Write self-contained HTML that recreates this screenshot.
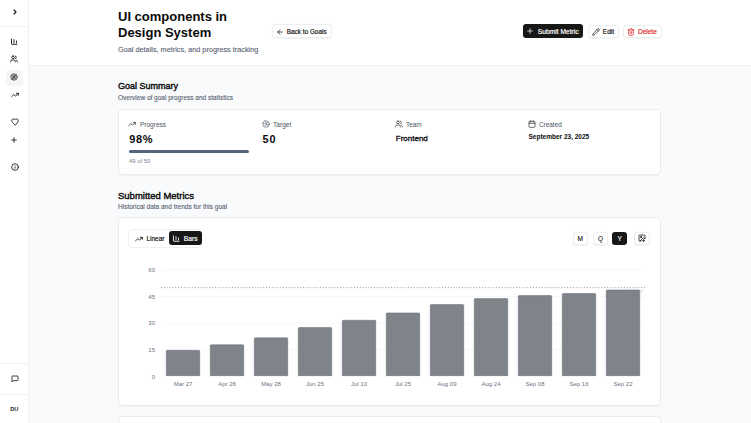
<!DOCTYPE html>
<html><head><meta charset="utf-8">
<style>
*{box-sizing:border-box;margin:0;padding:0}
html,body{width:751px;height:423px;overflow:hidden;background:#f9fafb;font-family:"Liberation Sans",sans-serif;color:#0a0a0a}
.abs{position:absolute}
.t{position:absolute;white-space:nowrap;line-height:1}
svg{position:absolute;overflow:visible}
.side{left:0;top:0;width:29px;height:423px;background:#fff;border-right:1px solid #efeff1}
.hdr{left:29px;top:0;width:722px;height:66px;background:#fff;border-bottom:1px solid #f1f2f3}
.card{position:absolute;background:#fff;border:1px solid #ebebed;border-radius:4.6px;box-shadow:0 0.5px 1px rgba(0,0,0,0.035)}
.btn{position:absolute;background:#fff;border:0.5px solid #eceef0;border-radius:3px;box-shadow:0 0.5px 1px rgba(0,0,0,0.05)}
.m{-webkit-text-stroke:0.18px currentColor}
.ic{fill:none;stroke:#141414;stroke-width:1.6;stroke-linecap:round;stroke-linejoin:round}
</style></head><body>

<!-- sidebar -->
<div class="abs side"></div>
<div class="abs" style="left:0;top:26px;width:28px;height:1px;background:#f1f1f3"></div>
<div class="abs" style="left:0;top:363px;width:28px;height:1px;background:#f1f1f3"></div>
<div class="abs" style="left:0;top:394px;width:28px;height:1px;background:#f1f1f3"></div>
<div class="abs" style="left:5.5px;top:69.5px;width:17.4px;height:16.3px;background:#f5f5f6;border-radius:3px"></div>

<!-- chevron -->
<svg style="left:10.9px;top:7.6px" width="8" height="8" viewBox="0 0 24 24"><path class="ic" d="M9 18l6-6-6-6" style="stroke-width:3.3;stroke:#111"/></svg>
<!-- bar chart -->
<svg style="left:10px;top:38px" width="8" height="8" viewBox="0 0 8 8"><g fill="none" stroke="#141414" stroke-linecap="round" stroke-linejoin="round" stroke-width="0.9"><path d="M1.5 0.9V5.9Q1.5 6.3 1.9 6.3H7"/><path d="M4 5V1.6M6.5 5V3"/></g></svg>
<!-- users -->
<svg style="left:10.25px;top:55.2px" width="8" height="8" viewBox="0 0 24 24"><path class="ic" d="M16 21v-2a4 4 0 0 0-4-4H6a4 4 0 0 0-4 4v2M9 3a4 4 0 1 0 0 8 4 4 0 0 0 0-8zM22 21v-2a4 4 0 0 0-3-3.87M16 3.13a4 4 0 0 1 0 7.75" style="stroke-width:2.5"/></svg>
<!-- target -->
<svg style="left:10.45px;top:73.45px" width="8" height="8" viewBox="0 0 24 24"><g fill="none" stroke-linecap="round"><circle cx="12" cy="12" r="10" fill="#a3a3a3" stroke="#5a5a5a" stroke-width="2"/><path d="M19 5L5 19M8 8l8 8" stroke="#333" stroke-width="2.2"/><path d="M12 2.5c3 3 3 7 0 9.5M12 21.5c-3-3-3-7 0-9.5" stroke="#555" stroke-width="1.5"/></g></svg>
<!-- trending -->
<svg style="left:10.7px;top:91.3px" width="8" height="8" viewBox="0 0 24 24"><path class="ic" d="M22 7l-8.5 8.5-5-5L2 17M16 7h6v6" style="stroke-width:2.6"/></svg>
<!-- heart -->
<svg style="left:10.65px;top:118.1px" width="8" height="8" viewBox="0 0 24 24"><path class="ic" d="M19 14c1.49-1.46 3-3.21 3-5.5A5.5 5.5 0 0 0 16.5 3c-1.76 0-3 .5-4.5 2-1.5-1.5-2.74-2-4.5-2A5.5 5.5 0 0 0 2 8.5c0 2.3 1.5 4.05 3 5.5l7 7z" style="stroke-width:2.5"/></svg>
<!-- plus -->
<svg style="left:10.4px;top:135.9px" width="8" height="8" viewBox="0 0 24 24"><path class="ic" d="M12 5v14M5 12h14" style="stroke-width:2.5"/></svg>
<!-- info -->
<svg style="left:10.5px;top:162.7px" width="8" height="8" viewBox="0 0 24 24"><g class="ic" style="stroke-width:2.5"><circle cx="12" cy="12" r="10"/><path d="M12 16v-4M12 8h.01"/></g></svg>
<!-- message -->
<svg style="left:10.6px;top:375.1px" width="8" height="8" viewBox="0 0 24 24"><path class="ic" d="M21 15a2 2 0 0 1-2 2H7l-4 4V5a2 2 0 0 1 2-2h14a2 2 0 0 1 2 2z" style="stroke-width:2.5"/></svg>
<div class="t" style="left:10.2px;top:406.8px;font-size:5.6px;font-weight:bold;color:#222">DU</div>

<!-- header -->
<div class="abs hdr"></div>
<div class="t" style="left:118px;top:8.5px;font-size:13px;font-weight:bold;line-height:16px;color:#0a0a0a">UI components in<br>Design System</div>
<div class="t" style="left:118px;top:45.5px;font-size:7.3px;color:#566070;-webkit-text-stroke:0.1px #566070">Goal details, metrics, and progress tracking</div>

<div class="btn" style="left:272px;top:24px;width:60px;height:14px"></div>
<svg style="left:275.5px;top:27.5px" width="8" height="8" viewBox="0 0 24 24"><path class="ic" d="M19 12H5M12 19l-7-7 7-7" style="stroke-width:2.2"/></svg>
<div class="t m" style="left:286.8px;top:29px;font-size:6.4px;color:#111">Back to Goals</div>

<div class="abs" style="left:522.7px;top:24.4px;width:60.5px;height:13.8px;background:#171717;border-radius:3px"></div>
<svg style="left:526.35px;top:27.45px" width="8" height="8" viewBox="0 0 24 24"><path class="ic" d="M12 5v14M5 12h14" style="stroke:#fff;stroke-width:2.2"/></svg>
<div class="t m" style="left:537.8px;top:28.8px;font-size:6.7px;color:#fff">Submit Metric</div>

<div class="btn" style="left:587.8px;top:24.5px;width:30.8px;height:13.9px"></div>
<svg style="left:591.5px;top:27.8px" width="8" height="8" viewBox="0 0 24 24"><path class="ic" d="M21.17 6.81a1 1 0 0 0-3.98-3.98L3.84 16.17a2 2 0 0 0-.5.83l-1.32 4.35a.5.5 0 0 0 .62.62l4.35-1.32a2 2 0 0 0 .83-.5zM15 5l4 4" style="stroke-width:2.2"/></svg>
<div class="t m" style="left:602.8px;top:28.9px;font-size:6.6px;color:#111">Edit</div>

<div class="btn" style="left:623px;top:24.5px;width:38.5px;height:13.9px"></div>
<svg style="left:626.7px;top:27.6px" width="8" height="8" viewBox="0 0 24 24"><path class="ic" d="M3 6h18M19 6v14c0 1-1 2-2 2H7c-1 0-2-1-2-2V6M8 6V4c0-1 1-2 2-2h4c1 0 2 1 2 2v2M10 11v6M14 11v6" style="stroke:#dc2626;stroke-width:2.2"/></svg>
<div class="t m" style="left:638px;top:28.9px;font-size:6.5px;color:#dc2626">Delete</div>

<!-- Goal summary -->
<div class="t" style="left:118px;top:81.8px;font-size:9px;color:#0a0a0a;-webkit-text-stroke:0.4px #0a0a0a">Goal Summary</div>
<div class="t" style="left:118px;top:95px;font-size:6.5px;color:#566070;-webkit-text-stroke:0.1px #566070">Overview of goal progress and statistics</div>

<div class="card" style="left:117.6px;top:108.5px;width:543.8px;height:66.9px"></div>

<svg style="left:128.3px;top:120.3px" width="8" height="8" viewBox="0 0 24 24"><path class="ic" d="M22 7l-8.5 8.5-5-5L2 17M16 7h6v6" style="stroke:#444;stroke-width:2.6"/></svg>
<div class="t" style="left:140px;top:121.7px;font-size:6.5px;color:#4b5563">Progress</div>
<div class="t" style="left:129.3px;top:133.9px;font-size:11px;font-weight:bold;color:#0a0a0a;letter-spacing:0.55px">98%</div>
<div class="abs" style="left:129px;top:149.8px;width:119.8px;height:3.5px;background:#56657f;border-radius:2px"></div>
<div class="t" style="left:129px;top:158.5px;font-size:5.9px;color:#7b8290">49 of 50</div>

<svg style="left:261.5px;top:120px" width="8" height="8" viewBox="0 0 24 24"><g fill="none" stroke="#6b7280" stroke-width="2" stroke-linecap="round"><circle cx="12" cy="12" r="10"/><path d="M19.13 5.09C15.22 9.14 10 10.44 2.25 10.94M21.75 12.84c-6.62-1.41-12.14 1-16.38 6.32M8.56 2.75c4.37 6 6 9.42 8 17.72"/></g></svg>
<div class="t" style="left:273px;top:121.7px;font-size:6.6px;color:#4b5563">Target</div>
<div class="t" style="left:262.6px;top:133.9px;font-size:10.8px;font-weight:bold;color:#0a0a0a;letter-spacing:0.9px">50</div>

<svg style="left:394.5px;top:120.1px" width="8" height="8" viewBox="0 0 24 24"><path class="ic" d="M16 21v-2a4 4 0 0 0-4-4H6a4 4 0 0 0-4 4v2M9 3a4 4 0 1 0 0 8 4 4 0 0 0 0-8zM22 21v-2a4 4 0 0 0-3-3.87M16 3.13a4 4 0 0 1 0 7.75" style="stroke:#555;stroke-width:2.6"/></svg>
<div class="t" style="left:406px;top:121.7px;font-size:6.4px;color:#4b5563">Team</div>
<div class="t m" style="left:395.8px;top:135.3px;font-size:8px;color:#0a0a0a;-webkit-text-stroke:0.3px #0a0a0a">Frontend</div>

<svg style="left:527.8px;top:120.2px" width="8" height="8" viewBox="0 0 24 24"><g class="ic" style="stroke:#555;stroke-width:2.6"><rect x="3" y="4" width="18" height="18" rx="2"/><path d="M16 2v4M8 2v4M3 10h18"/></g></svg>
<div class="t" style="left:539px;top:121.7px;font-size:6.4px;color:#4b5563">Created</div>
<div class="t" style="left:528.5px;top:134.1px;font-size:6.5px;font-weight:bold;color:#0a0a0a">September 23, 2025</div>

<!-- Submitted metrics -->
<div class="t" style="left:118px;top:191px;font-size:9.5px;color:#0a0a0a;-webkit-text-stroke:0.4px #0a0a0a">Submitted Metrics</div>
<div class="t" style="left:118px;top:204px;font-size:6.5px;color:#566070;-webkit-text-stroke:0.1px #566070">Historical data and trends for this goal</div>

<div class="card" style="left:117.6px;top:217px;width:543.8px;height:189.4px"></div>

<div class="abs" style="left:128.3px;top:229px;width:74.2px;height:18.5px;border:0.8px solid #eff0f2;border-radius:4px;background:#fff"></div>
<svg style="left:135.35px;top:234.5px" width="8" height="8" viewBox="0 0 24 24"><path class="ic" d="M22 7l-8.5 8.5-5-5L2 17M16 7h6v6" style="stroke-width:2.6"/></svg>
<div class="t m" style="left:146.4px;top:236.2px;font-size:6.5px;color:#111">Linear</div>
<div class="abs" style="left:169px;top:231.3px;width:33px;height:13.7px;background:#171717;border-radius:3px"></div>
<svg style="left:172px;top:234.5px" width="8" height="8" viewBox="0 0 8 8"><g fill="none" stroke="#fff" stroke-linecap="round" stroke-linejoin="round" stroke-width="0.85"><path d="M1.5 0.9V5.9Q1.5 6.3 1.9 6.3H7"/><path d="M4 5V1.6M6.5 5V3"/></g></svg>
<div class="t m" style="left:183.8px;top:236.2px;font-size:6.7px;color:#fff">Bars</div>

<div class="btn" style="left:572.6px;top:231.6px;width:15.5px;height:13.3px"></div>
<div class="t" style="left:577.6px;top:236.1px;font-size:6.6px;color:#111;-webkit-text-stroke:0.1px #111">M</div>
<div class="btn" style="left:592.8px;top:231.6px;width:15px;height:13.3px"></div>
<div class="t" style="left:597.9px;top:236.1px;font-size:6.3px;color:#111;-webkit-text-stroke:0.1px #111">Q</div>
<div class="abs" style="left:612px;top:231.6px;width:14.7px;height:13.3px;background:#171717;border-radius:3px"></div>
<div class="t" style="left:617.5px;top:236.1px;font-size:6.6px;color:#fff;-webkit-text-stroke:0.1px #fff">Y</div>
<div class="btn" style="left:634.3px;top:231.6px;width:15.5px;height:13.3px"></div>
<svg style="left:638.4px;top:234.15px" width="8" height="8" viewBox="0 0 24 24"><g class="ic" style="stroke-width:2.4"><path d="M10.3 21H5a2 2 0 0 1-2-2V5a2 2 0 0 1 2-2h14a2 2 0 0 1 2 2v10l-3.1-3.1a2 2 0 0 0-2.814.014L6 21M14 19l3 3v-5.5M17 22l3-3"/><circle cx="9" cy="9" r="2"/></g></svg>

<!-- chart -->
<svg style="left:0;top:0" width="751" height="423">
  <g stroke="#f2f3f5" stroke-width="0.7">
    <line x1="161" y1="269.90" x2="645" y2="269.90"/>
    <line x1="161" y1="296.52" x2="645" y2="296.52"/>
    <line x1="161" y1="323.15" x2="645" y2="323.15"/>
    <line x1="161" y1="349.77" x2="645" y2="349.77"/>
  </g>
  <g fill="#7f848b" stroke="#646a72" stroke-width="0.5">
    <path d="M166.25 375.65V351.35Q166.25 350.35 167.25 350.35H198.75Q199.75 350.35 199.75 351.35V375.65Z"/>
    <path d="M210.25 375.65V345.75Q210.25 344.75 211.25 344.75H242.75Q243.75 344.75 243.75 345.75V375.65Z"/>
    <path d="M254.25 375.65V338.85Q254.25 337.85 255.25 337.85H286.75Q287.75 337.85 287.75 338.85V375.65Z"/>
    <path d="M298.25 375.65V328.45Q298.25 327.45 299.25 327.45H330.75Q331.75 327.45 331.75 328.45V375.65Z"/>
    <path d="M342.25 375.65V321.25Q342.25 320.25 343.25 320.25H374.75Q375.75 320.25 375.75 321.25V375.65Z"/>
    <path d="M386.25 375.65V313.90Q386.25 312.90 387.25 312.90H418.75Q419.75 312.90 419.75 313.90V375.65Z"/>
    <path d="M430.25 375.65V305.55Q430.25 304.55 431.25 304.55H462.75Q463.75 304.55 463.75 305.55V375.65Z"/>
    <path d="M474.25 375.65V299.55Q474.25 298.55 475.25 298.55H506.75Q507.75 298.55 507.75 299.55V375.65Z"/>
    <path d="M518.25 375.65V296.55Q518.25 295.55 519.25 295.55H550.75Q551.75 295.55 551.75 296.55V375.65Z"/>
    <path d="M562.25 375.65V294.55Q562.25 293.55 563.25 293.55H594.75Q595.75 293.55 595.75 294.55V375.65Z"/>
    <path d="M606.25 375.65V290.95Q606.25 289.95 607.25 289.95H638.75Q639.75 289.95 639.75 290.95V375.65Z"/>
  </g>
  <line x1="161" y1="287.65" x2="645" y2="287.65" stroke="#777" stroke-width="0.75" stroke-dasharray="1 1.84"/>
  <circle cx="641.5" cy="291.4" r="1.1" fill="#fff" stroke="#aaa" stroke-width="0.4"/>
  <g font-family="Liberation Sans" font-size="6" fill="#6b7280" text-anchor="end">
    <text x="155" y="272.00">60</text>
    <text x="155" y="298.62">45</text>
    <text x="155" y="325.25">30</text>
    <text x="155" y="351.88">15</text>
    <text x="155" y="378.50">0</text>
  </g>
  <g font-family="Liberation Sans" font-size="6" fill="#6b7280" text-anchor="middle">
    <text x="183" y="386.0">Mar 27</text>
    <text x="227" y="386.0">Apr 26</text>
    <text x="271" y="386.0">May 28</text>
    <text x="315" y="386.0">Jun 25</text>
    <text x="359" y="386.0">Jul 10</text>
    <text x="403" y="386.0">Jul 25</text>
    <text x="447" y="386.0">Aug 09</text>
    <text x="491" y="386.0">Aug 24</text>
    <text x="535" y="386.0">Sep 08</text>
    <text x="579" y="386.0">Sep 16</text>
    <text x="623" y="386.0">Sep 22</text>
  </g>
</svg>

<div class="card" style="left:117.6px;top:416.2px;width:543.8px;height:60px"></div>

</body></html>
